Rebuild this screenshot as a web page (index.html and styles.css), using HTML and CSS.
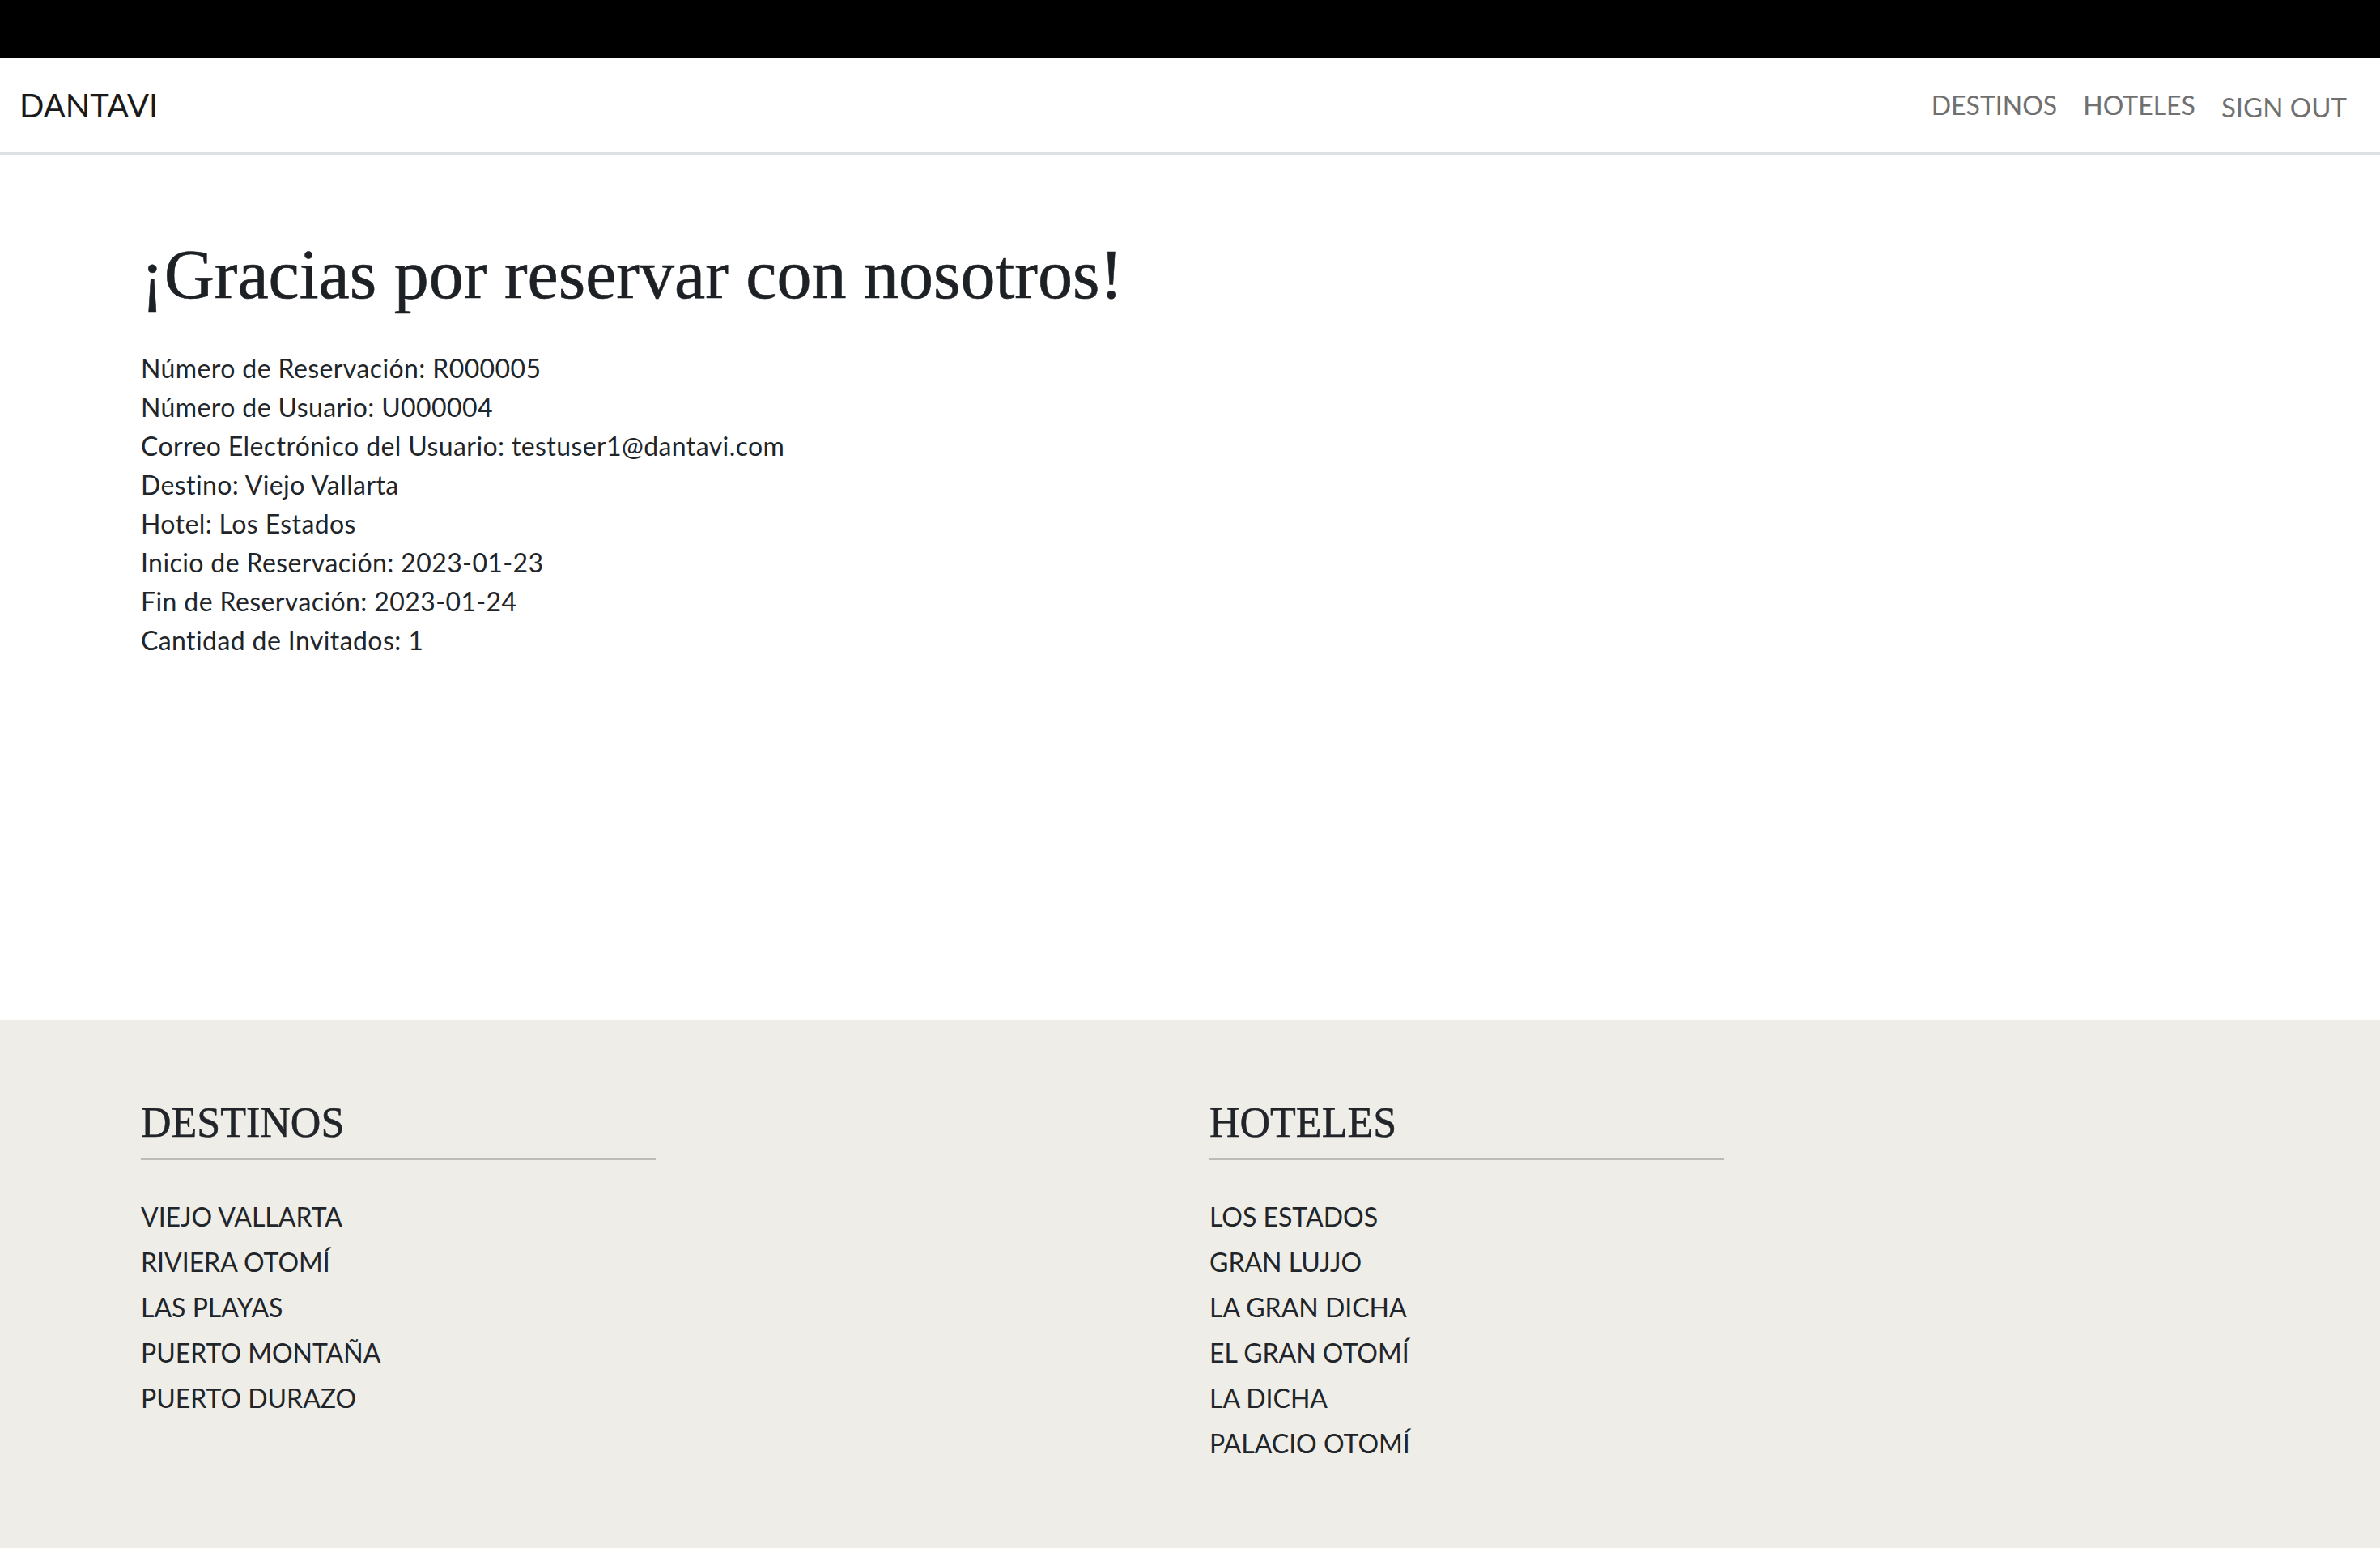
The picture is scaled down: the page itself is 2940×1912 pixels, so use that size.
FILE: index.html
```html
<!DOCTYPE html>
<html lang="es">
<head>
<meta charset="utf-8">
<title>DANTAVI</title>
<link rel="stylesheet" href="styles.css">
</head>
<body>
<div class="topbar"></div>
<header class="navbar">
  <a class="brand" href="#">DANTAVI</a>
  <nav class="nav">
    <a class="nav-link" href="#">DESTINOS</a>
    <a class="nav-link" href="#">HOTELES</a>
    <button class="nav-btn" type="button">SIGN OUT</button>
  </nav>
</header>
<main class="main">
  <div class="container">
    <h1 class="title">¡Gracias por reservar con nosotros!</h1>
    <div class="details">
      <p>Número de Reservación: R000005</p>
      <p>Número de Usuario: U000004</p>
      <p>Correo Electrónico del Usuario: testuser1@dantavi.com</p>
      <p>Destino: Viejo Vallarta</p>
      <p>Hotel: Los Estados</p>
      <p>Inicio de Reservación: 2023-01-23</p>
      <p>Fin de Reservación: 2023-01-24</p>
      <p>Cantidad de Invitados: 1</p>
    </div>
  </div>
</main>
<footer class="footer">
  <div class="container footer-row">
    <div class="footer-col">
      <h3 class="footer-title">DESTINOS</h3>
      <hr class="footer-rule">
      <ul class="footer-list">
        <li><a href="#">VIEJO VALLARTA</a></li>
        <li><a href="#">RIVIERA OTOMÍ</a></li>
        <li><a href="#">LAS PLAYAS</a></li>
        <li><a href="#">PUERTO MONTAÑA</a></li>
        <li><a href="#">PUERTO DURAZO</a></li>
      </ul>
    </div>
    <div class="footer-col">
      <h3 class="footer-title">HOTELES</h3>
      <hr class="footer-rule">
      <ul class="footer-list">
        <li><a href="#">LOS ESTADOS</a></li>
        <li><a href="#">GRAN LUJJO</a></li>
        <li><a href="#">LA GRAN DICHA</a></li>
        <li><a href="#">EL GRAN OTOMÍ</a></li>
        <li><a href="#">LA DICHA</a></li>
        <li><a href="#">PALACIO OTOMÍ</a></li>
      </ul>
    </div>
  </div>
</footer>
</body>
</html>
```
FILE: styles.css
```css
* { box-sizing: border-box; }
html, body { margin: 0; padding: 0; }
body {
  font-family: Lato, "Open Sans", sans-serif;
  font-size: 32px;
  line-height: 1.5;
  color: #212529;
  background: #fff;
}
a { text-decoration: none; color: inherit; }

.topbar { height: 72px; background: #000; }

.navbar {
  height: 120px;
  padding: 0 41px 0 24px;
  display: flex;
  align-items: center;
  justify-content: space-between;
  border-bottom: 4px solid #dee2e6;
}
.brand {
  font-size: 40px;
  color: #1a1a1a;
}
.nav { display: flex; align-items: center; gap: 32px; }
.nav-link { color: #707070; font-size: 32px; }
.nav-btn {
  font-family: inherit;
  font-size: 33px;
  color: #707070;
  background: none;
  border: 0;
  padding: 4px 0 0 0;
  cursor: pointer;
}

.container {
  max-width: 2640px;
  margin: 0 auto;
  padding: 0 24px;
}

.main { height: 1068px; padding-top: 96px; }
.title {
  font-family: "Liberation Serif", "Times New Roman", serif;
  font-weight: 400;
  font-size: 86px;
  line-height: 1.2;
  margin: 0 0 40px;
  color: #1d2024;
  -webkit-text-stroke: 0.6px #1d2024;
}
.details p { margin: 0; letter-spacing: 0.4px; }

.footer {
  background: #efede8;
  padding: 96px 0 104px;
}
.footer-row { display: grid; grid-template-columns: 1fr 1fr; column-gap: 48px; }
.footer-title {
  font-family: "Liberation Serif", "Times New Roman", serif;
  font-weight: 400;
  font-size: 52px;
  line-height: 1.2;
  margin: 0;
  -webkit-text-stroke: 0.5px #212529;
}
.footer-rule {
  width: 50%;
  margin: 12px 0 42px;
  border: 0;
  border-top: 3px solid #bdbbb6;
}
.footer-list { list-style: none; margin: 0; padding: 0; }
.footer-list li { line-height: 56px; }
```
